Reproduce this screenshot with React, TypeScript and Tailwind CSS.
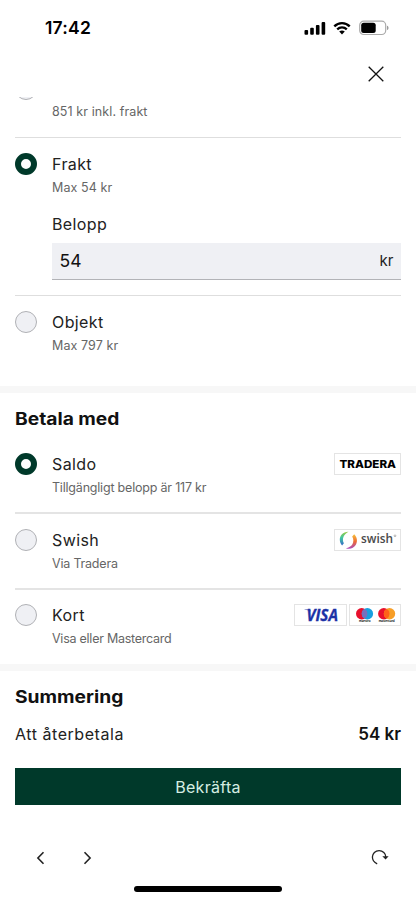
import type { ReactNode } from "react";
import clsx from "clsx";

const Radio = ({ checked }: { checked?: boolean }) => (
  <span
    className={clsx(
      "block h-[22px] w-[22px] shrink-0 rounded-full",
      checked ? "border-[6.500px] border-[#00392a] bg-white" : "border border-[#b0b1b5] bg-[#eff0f4]"
    )}
  />
);

type OptionProps = {
  title: string;
  description: string;
  checked?: boolean;
  descriptionClass?: string;
  children?: ReactNode;
};

const Option = ({ title, description, checked, descriptionClass, children }: OptionProps) => (
  <div className="flex items-start">
    <Radio checked={checked} />
    <div className="ml-[15px] flex-1">
      <div className="text-base leading-[22px] tracking-[0.4px] text-[#222]">{title}</div>
      <div className={clsx("mt-[2px] text-[12.5px] leading-[22px] text-[#666]", descriptionClass)}>{description}</div>
    </div>
    {children}
  </div>
);

const Heading = ({ children }: { children: ReactNode }) => (
  <h2 className="origin-left scale-x-[1.13] text-[17px] leading-[22px] font-bold text-[#111]">{children}</h2>
);

const LogoBox = ({ children, className }: { children: ReactNode; className: string }) => (
  <div className={clsx("flex h-[22px] items-center justify-center border border-[#e4e4e4] bg-white", className)}>
    {children}
  </div>
);

const TraderaLogo = () => (
  <svg width="58" height="12" viewBox="0 0 58 12">
    <text x="0.5" y="9.800" fontFamily="Inter, sans-serif" fontSize="10.3" fontWeight="800" textLength="56.5" lengthAdjust="spacingAndGlyphs">
      TRADERA
    </text>
  </svg>
);

const SwishLogo = () => (
  <svg width="65" height="20" viewBox="0 0 65 20">
    <defs>
      <linearGradient id="swish-left" x1="0" y1="0" x2="0" y2="1">
        <stop offset="0" stopColor="#9acb3c" />
        <stop offset="0.45" stopColor="#3fc6a4" />
        <stop offset="1" stopColor="#3468c8" />
      </linearGradient>
      <linearGradient id="swish-right" x1="0" y1="0" x2="0" y2="1">
        <stop offset="0" stopColor="#f6c43a" />
        <stop offset="0.5" stopColor="#ee6b35" />
        <stop offset="1" stopColor="#a74bc0" />
      </linearGradient>
    </defs>
    <path d="M13.500 1.700C8 1.600 4.600 5.500 4.800 10c.1 2.200.9 4 2.300 5.400l1.800-2.100C6.600 8.700 8.800 4.300 13.500 1.700Z" fill="url(#swish-left)" />
    <path d="M19.200 4.200C22.300 7.200 22.800 11.500 20.700 15c-2 3.300-6 4.600-9.800 3.200 5.800-.6 9.500-6 6.300-11.600Z" fill="url(#swish-right)" />
    <text x="26" y="13.200" fontFamily="Open Sans, sans-serif" fontSize="12" fontWeight="600" fill="#49494b" textLength="32" lengthAdjust="spacingAndGlyphs">
      swish
    </text>
    <circle cx="60" cy="5.800" r="0.900" fill="none" stroke="#777" strokeWidth="0.500" />
  </svg>
);

const VisaLogo = () => (
  <svg width="50" height="20" viewBox="0 0 50 20">
    <text x="10.500" y="15.500" fontFamily="Open Sans, sans-serif" fontSize="15.500" fontWeight="700" fontStyle="italic" fill="#1c32a6" stroke="#1c32a6" strokeWidth="0.300" textLength="31.500" lengthAdjust="spacingAndGlyphs">
      VISA
    </text>
    <path d="M8.500 4.400h5.500l.8 2.100c-1.800-1.100-3.800-1.600-6.300-1.700Z" fill="#1c32a6" />
  </svg>
);

const CardBrands = () => (
  <svg width="50" height="20" viewBox="0 0 50 20">
    <circle cx="11.700" cy="8.800" r="5.700" fill="#e8102d" />
    <circle cx="17.400" cy="8.800" r="5.700" fill="#18a0df" />
    <path d="M14.550 3.860a5.700 5.700 0 0 1 0 9.880a5.700 5.700 0 0 1 0-9.880Z" fill="#7770bd" />
    <circle cx="33.800" cy="8.800" r="5.700" fill="#e8102d" />
    <circle cx="39.500" cy="8.800" r="5.700" fill="#f79e27" />
    <path d="M36.650 3.860a5.700 5.700 0 0 1 0 9.880a5.700 5.700 0 0 1 0-9.880Z" fill="#ff6119" />
    <text x="9" y="17.400" fontSize="3" fontWeight="700" fontFamily="Inter, sans-serif" fill="#222" textLength="11.500">
      maestro
    </text>
    <text x="28.700" y="17.400" fontSize="3" fontWeight="700" fontFamily="Inter, sans-serif" fill="#222" textLength="16">
      mastercard
    </text>
  </svg>
);

const StatusBar = () => (
  <div className="flex h-14 items-center justify-between pr-[27px] pl-[45px]">
    <span className="text-[17.5px] leading-6 font-semibold tracking-[0.2px] text-black">17:42</span>
    <div className="flex items-center">
      <svg width="22" height="14" viewBox="0 0 22 14">
        <rect x="0.500" y="9" width="3.600" height="4.800" rx="1" />
        <rect x="6.200" y="6.700" width="3.600" height="7.100" rx="1" />
        <rect x="11.900" y="4" width="3.600" height="9.800" rx="1" />
        <rect x="17.600" y="1" width="3.600" height="12.800" rx="1" />
      </svg>
      <svg className="ml-[7px]" width="18" height="14" viewBox="0 0 18 14">
        <path d="M1.300 5.300C5.600 1 12.400 1 16.700 5.300" fill="none" stroke="#000" strokeWidth="2.400" />
        <path d="M4.200 8.400c2.700-2.600 6.900-2.600 9.600 0" fill="none" stroke="#000" strokeWidth="2.300" />
        <path d="M6.200 10.600c1.700-1.400 3.900-1.400 5.600 0L9 13.500Z" />
      </svg>
      <svg className="ml-2" width="30" height="16" viewBox="0 0 30 16">
        <rect x="0.700" y="1.200" width="26" height="13.300" rx="4" fill="none" stroke="#aaa" strokeWidth="1.200" />
        <rect x="2.200" y="2.800" width="14.500" height="10.200" rx="2.500" />
        <path d="M28 5.700c2 .7 2 3.600 0 4.300Z" fill="#999" />
      </svg>
    </div>
  </div>
);

const BottomBar = () => (
  <div className="flex h-[82px] flex-col">
    <div className="flex h-[68px] items-end pr-[27px] pb-[21px] pl-[36px]">
      <svg width="10" height="14" viewBox="0 0 10 14" fill="none" stroke="#222" strokeWidth="1.600">
        <path d="M7.500 1.200 1.900 7l5.600 5.800" />
      </svg>
      <svg className="ml-[37px]" width="10" height="14" viewBox="0 0 10 14" fill="none" stroke="#222" strokeWidth="1.600">
        <path d="m1.500 1.200 5.600 5.800-5.600 5.800" />
      </svg>
      <svg className="ml-auto" width="18" height="16" viewBox="0 0 18 16">
        <path d="M6.200 14.800C3.400 13.700 1.400 11.100 1.400 8.100c0-3.700 3-6.500 6.700-6.500s6.700 2.700 6.700 6.400" fill="none" stroke="#222" strokeWidth="1.300" />
        <path d="M11.300 7.300H17.600L14.600 10.500Z" fill="#222" />
      </svg>
    </div>
    <div className="mx-auto h-[5.5px] w-[148px] rounded-full bg-black" />
  </div>
);

export default function App() {
  return (
    <div className="flex h-[900px] w-[416px] flex-col overflow-hidden bg-white font-['Inter',sans-serif] text-[#222]">
      <StatusBar />
      <div className="flex h-[41px] justify-end pt-[9.5px] pr-[32.5px]">
        <svg width="16" height="16" viewBox="0 0 16 16" fill="none" stroke="#111" strokeWidth="1.300">
          <path d="m.7.700 14.600 14.600M15.300.700.700 15.300" />
        </svg>
      </div>

      <main className="h-[721px] overflow-hidden">
        <section className="px-[15px]">
          <div className="flex h-[40px] items-start overflow-hidden">
            <div className="-mt-[19px]">
              <Radio />
            </div>
            <div className="ml-[15px] pt-[4px] text-[12.5px] leading-[22px] tracking-[0.1px] text-[#666]">851 kr inkl. frakt</div>
          </div>
          <div className="border-t border-[#dedede] pt-[15px]">
            <Option title="Frakt" description="Max 54 kr" checked descriptionClass="tracking-[0.1px]" />
            <div className="mt-[14px] pl-[37px]">
              <label className="block text-base leading-[22px] tracking-[0.4px]">Belopp</label>
              <div className="mt-2 flex h-[37px] items-center justify-between border-b border-[#b2b3b7] bg-[#eff0f4] px-[7.5px]">
                <span className="text-[17.5px] text-[#111]">54</span>
                <span className="pt-px text-[15px]">kr</span>
              </div>
            </div>
          </div>
          <div className="mt-[15px] h-[91px] border-t border-[#dedede] pt-[15px]">
            <Option title="Objekt" description="Max 797 kr" descriptionClass="tracking-[0.1px]" />
          </div>
        </section>

        <section className="border-t-[7px] border-[#f7f7f7] px-[15px] pt-[15px] pb-[15px]">
          <Heading>Betala med</Heading>
          <div className="pt-[23px] pb-[13px]">
            <Option title="Saldo" description="Tillgängligt belopp är 117 kr" checked descriptionClass="tracking-[-0.2px]">
              <LogoBox className="w-[67px]">
                <TraderaLogo />
              </LogoBox>
            </Option>
          </div>
          <div className="border-t-2 border-[#e4e4e4] pt-[15px] pb-[13px]">
            <Option title="Swish" description="Via Tradera" descriptionClass="tracking-[-0.2px]">
              <LogoBox className="w-[67px]">
                <SwishLogo />
              </LogoBox>
            </Option>
          </div>
          <div className="-mb-px border-t-2 border-[#e4e4e4] pt-[14px]">
            <Option title="Kort" description="Visa eller Mastercard" descriptionClass="tracking-[-0.25px]">
              <div className="flex gap-[2px]">
                <LogoBox className="w-[53px]">
                  <VisaLogo />
                </LogoBox>
                <LogoBox className="w-[52px]">
                  <CardBrands />
                </LogoBox>
              </div>
            </Option>
          </div>
        </section>

        <section className="border-t-[7px] border-[#f7f7f7] px-[15px] pt-[15px]">
          <Heading>Summering</Heading>
          <div className="mt-[15px] flex items-center justify-between leading-[22px]">
            <span className="text-base leading-[22px] tracking-[0.55px]">Att återbetala</span>
            <span className="text-[17px] leading-[22px] font-semibold text-[#111]">54 kr</span>
          </div>
          <button className="mt-[23px] block h-[37px] w-full bg-[#00392a] text-base tracking-[0.3px] text-[#d5eee2]">
            Bekräfta
          </button>
        </section>
      </main>

      <BottomBar />
    </div>
  );
}
